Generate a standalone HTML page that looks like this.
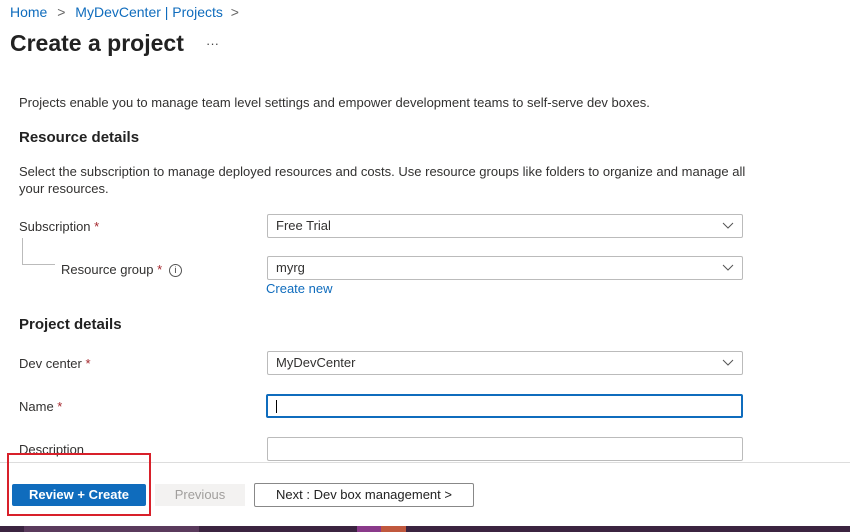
<!DOCTYPE html>
<html><head><meta charset="utf-8"><style>
body{margin:0;width:850px;height:532px;overflow:hidden;background:#fff;font-family:"Segoe UI","Liberation Sans",sans-serif;color:#323130;position:relative}
.a{position:absolute;white-space:nowrap}
.t{font-size:13px}
.h{font-size:15px;font-weight:bold;color:#222}
.req{color:#a4262c}
.box{position:absolute;left:267px;width:466px;height:22px;border:1px solid #bbb;border-radius:2px;background:#fff;font-size:13px;line-height:22px;padding-left:8px;box-sizing:content-box}
.chev{position:absolute;right:8px;top:7px}
.lnk{color:#0f6cbd}
</style></head><body>
<div class="a t lnk" style="left:10px;top:4px;font-size:14px">Home <span style="color:#666;margin:0 6px">&gt;</span> MyDevCenter | Projects <span style="color:#666;margin-left:4px">&gt;</span></div>
<div class="a" style="left:10px;top:30px;font-size:23px;font-weight:600;color:#222">Create a project</div>
<div class="a" style="left:206px;top:36px;font-size:13px;color:#444">···</div>
<div class="a t" style="left:19px;top:95px">Projects enable you to manage team level settings and empower development teams to self-serve dev boxes.</div>
<div class="a h" style="left:19px;top:129px">Resource details</div>
<div class="a t" style="left:19px;top:164px">Select the subscription to manage deployed resources and costs. Use resource groups like folders to organize and manage all</div>
<div class="a t" style="left:19px;top:181px">your resources.</div>
<div class="a t" style="left:19px;top:219px">Subscription <span class="req">*</span></div>
<div class="a" style="left:22px;top:238px;width:32px;height:26px;border-left:1px solid #bbb;border-bottom:1px solid #bbb"></div>
<div class="a t" style="left:61px;top:262px">Resource group <span class="req">*</span> <span style="display:inline-block;width:11px;height:11px;border:1px solid #555;border-radius:50%;font-size:9px;line-height:11px;text-align:center;vertical-align:1px;margin-left:3px">i</span></div>
<div class="box" style="top:214px">Free Trial<svg class="chev" width="12" height="8"><path d="M1 1l5 5 5-5" stroke="#555" fill="none"/></svg></div>
<div class="box" style="top:256px">myrg<svg class="chev" width="12" height="8"><path d="M1 1l5 5 5-5" stroke="#555" fill="none"/></svg></div>
<div class="a t lnk" style="left:266px;top:281px">Create new</div>
<div class="a h" style="left:19px;top:316px">Project details</div>
<div class="a t" style="left:19px;top:356px">Dev center <span class="req">*</span></div>
<div class="box" style="top:351px">MyDevCenter<svg class="chev" width="12" height="8"><path d="M1 1l5 5 5-5" stroke="#555" fill="none"/></svg></div>
<div class="a t" style="left:19px;top:399px">Name <span class="req">*</span></div>
<div class="box" style="top:394px;border:2px solid #0f6cbd;height:20px;width:465px;left:266px"><span style="display:inline-block;width:1px;height:13px;background:#000;vertical-align:-2px"></span></div>
<div class="a t" style="left:19px;top:442px">Description</div>
<div class="box" style="top:437px"></div>
<div class="a" style="left:0;top:462px;width:850px;height:64px;background:#fff;border-top:1px solid #ddd"></div>
<div class="a" style="left:12px;top:484px;width:134px;height:22px;background:#0f6cbd;border-radius:2px;color:#fff;font-size:13px;font-weight:600;text-align:center;line-height:22px">Review + Create</div>
<div class="a" style="left:155px;top:484px;width:90px;height:22px;background:#f3f2f1;color:#a19f9d;font-size:13px;text-align:center;line-height:22px">Previous</div>
<div class="a" style="left:254px;top:483px;width:218px;height:22px;border:1px solid #888;border-radius:2px;font-size:13px;text-align:center;line-height:22px;color:#222">Next : Dev box management &gt;</div>
<div class="a" style="left:7px;top:453px;width:140px;height:59px;border:2px solid #d8202a"></div>
<div class="a" style="left:0;top:526px;width:850px;height:6px;background:#3b2440"></div>
<div class="a" style="left:24px;top:526px;width:175px;height:6px;background:#5a3a5c"></div>
<div class="a" style="left:357px;top:526px;width:24px;height:6px;background:#8a3a8a"></div>
<div class="a" style="left:381px;top:526px;width:25px;height:6px;background:#c0583e"></div>
</body></html>
